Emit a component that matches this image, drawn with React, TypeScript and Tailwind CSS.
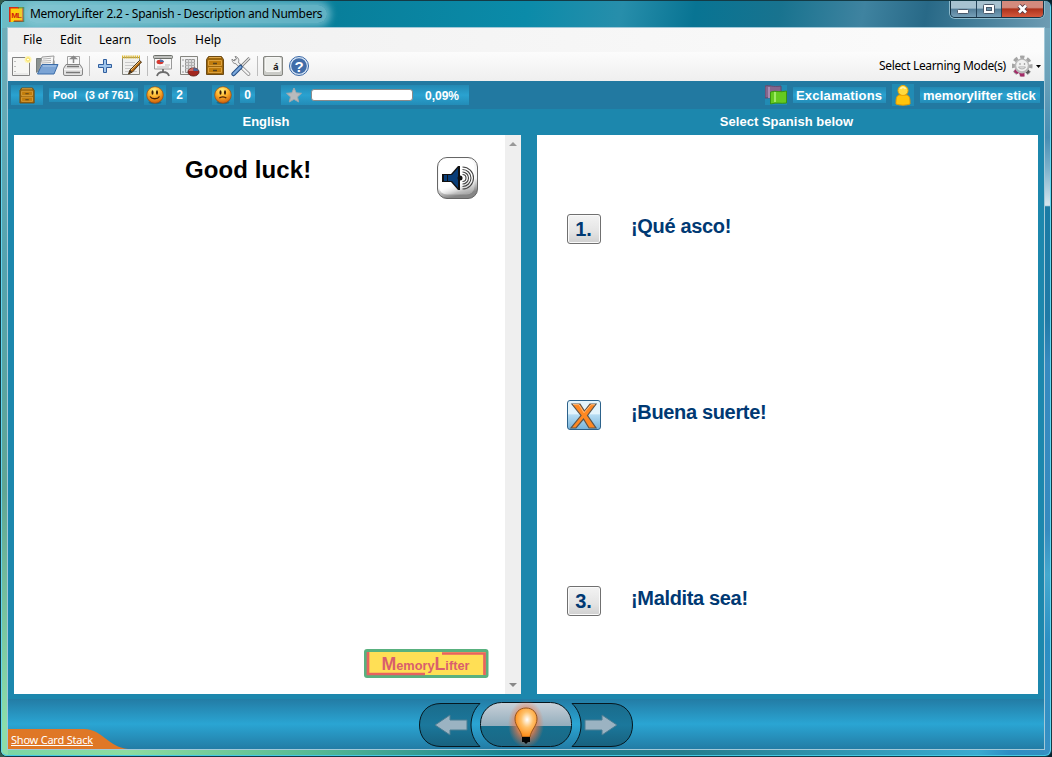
import React from "react";

const ui = "font-['Noto_Sans',sans-serif]";
const arial = "font-['Liberation_Sans',Arial,sans-serif]";
const glow = "bg-linear-to-b from-[#2389b3] via-[#2aa2d0] to-[#238cb7]";

function Tool({ children }: { children: React.ReactNode }) {
  return (
    <button className="h-6 w-[26px] shrink-0">
      <svg width="26" height="24" viewBox="0 0 26 24" fill="none">{children}</svg>
    </button>
  );
}

const Sep = () => (
  <div className="flex h-5 w-[6px] shrink-0 justify-center">
    <div className="h-full w-px bg-[#bdbdbd]" />
  </div>
);

function Cabinet({ dx = 0, dy = 0 }: { dx?: number; dy?: number }) {
  return (
    <g transform={`translate(${dx} ${dy})`}>
      <path d="M2.500 .5h13l2 3v15H.5v-15z" fill="#9c660c" stroke="#6e4b14" />
      <path d="M3 1.500h12" stroke="#dfa84c" />
      <path d="M2.500 4.500h13v5h-13zM2.500 11.500h13v5h-13z" fill="#c17c0b" stroke="#dda13c" />
      <path d="M7 7.500h4M7 14.500h4" stroke="#5a431e" strokeWidth="1.300" />
    </g>
  );
}

function Face({ sad = false }: { sad?: boolean }) {
  const id = sad ? "faceSad" : "faceHappy";
  return (
    <div className="h-5 w-[22px] bg-linear-to-b from-[#2187b0] via-[#239ac7] to-[#2187b0]">
      <svg width="22" height="20" viewBox="0 0 22 20" fill="none">
        <defs>
          <radialGradient id={id} cx=".45" cy=".22" r=".8">
            <stop stopColor="#fff080" /><stop offset=".45" stopColor="#ffb52e" /><stop offset="1" stopColor="#ca5908" />
          </radialGradient>
        </defs>
        <ellipse cx="11" cy="17.500" rx="6.500" ry="1.800" fill="#174f67" opacity=".5" />
        <circle cx="11" cy="10" r="8.300" fill={`url(#${id})`} stroke="#9d4b09" strokeWidth=".7" />
        <ellipse cx="8.500" cy="7.500" rx="1" ry="2.200" fill="#3a1c05" />
        <ellipse cx="13" cy="7.500" rx="1" ry="2.200" fill="#3a1c05" />
        <path d={sad ? "M7.300 13.200c1.500-1.800 5.500-1.800 7 0" : "M6 11.500c2 3 7.500 3 9.500 0"} stroke="#4b2105" strokeWidth="1.300" />
      </svg>
    </div>
  );
}

function TitleBar() {
  return (
    <div className="flex h-[27px] shrink-0 bg-[linear-gradient(100deg,#6ebdc6_0%,#087f9b_32%,#0b8ba9_50%,#278eab_59%,#087493_66%,#18738f_74%,#3f83a0_82%,#286987_88%,#6e9cb3_100%)]">
      <svg className="ml-[7px] mt-[6px] shrink-0" width="16" height="15" viewBox="0 0 16 15">
        <path d="M0 0h15v15H0z" fill="#ffce0b" />
        <path d="M.8 15V.8H10M14.200 0v14.200H5" stroke="#d72815" strokeWidth="1.600" fill="none" />
        <path d="M9 .8h6M14.800 0v15H4" stroke="#2d8a4b" strokeWidth="1" fill="none" />
        <text x="2.300" y="10.500" fontFamily="Liberation Sans, sans-serif" fontWeight="bold" fontSize="8" textLength="10.500" fill="#d21d0c">ML</text>
      </svg>
      <div className={`ml-[2px] mt-[4px] h-[18px] w-[300px] rounded-full bg-[#8fcbd8]/65 pl-[3px] shadow-[0_0_7px_4px_rgba(143,203,216,0.65)] ${ui} whitespace-nowrap text-[12px] leading-[18px] tracking-[-0.27px] text-black`}>
        MemoryLifter 2.2 - Spanish - Description and Numbers
      </div>
      <div className="ml-auto mr-[6px] flex h-[17px] overflow-hidden rounded-b-[5px] border border-t-0 border-[#163345] shadow-[0_0_0_1px_#8cb9cb]">
        <button className="w-[26px] border-r border-[#244359] bg-linear-to-b from-[#a7c2d0] from-45% via-[#537d97] via-50% to-[#769fb8]">
          <svg width="25" height="16" fill="none"><rect x="6.500" y="8.500" width="11" height="4" rx="1" fill="#fff" stroke="#48596b" /></svg>
        </button>
        <button className="w-[25px] border-r border-[#244359] bg-linear-to-b from-[#a7c2d0] from-45% via-[#537d97] via-50% to-[#769fb8]">
          <svg width="24" height="16" fill="none"><rect x="6.500" y="3.500" width="11" height="9" rx="1" fill="#fff" stroke="#48596b" /><rect x="9.500" y="6.500" width="5" height="3" fill="#6991a8" stroke="#48596b" /></svg>
        </button>
        <button className="w-[41px] bg-linear-to-b from-[#d38a7d] from-40% via-[#ad321c] via-50% to-[#d5583c]">
          <svg width="41" height="16" fill="none"><path d="m17 4.500 7 7m0-7-7 7" stroke="#503743" strokeWidth="4.500" /><path d="m17 4.500 7 7m0-7-7 7" stroke="#fff" strokeWidth="2.700" /></svg>
        </button>
      </div>
    </div>
  );
}

function Toolbar() {
  return (
    <div className="flex h-[29px] shrink-0 items-center bg-linear-to-b from-[#fcfcfc] to-[#efefef] pb-px">
      <Tool>
        <path d="M4.500 3.500h17v18h-17z" fill="#f6f6f4" stroke="#838383" /><path d="M6 20h14" stroke="#ddd" /><path d="M7 7v1m0 4v1m0 4v1" stroke="#888" />
        <circle cx="20" cy="5.500" r="3.500" fill="#fff5ae" /><circle cx="20" cy="5.500" r="1.600" fill="#fff" stroke="#f5dc52" />
      </Tool>
      <Tool>
        <path d="M2.500 18.500v-14h6l1.500 2h10v8" fill="#8a9291" stroke="#777d7c" />
        <path d="m8 3 12-1-1 9-14 7z" fill="#f8f8f8" stroke="#999" /><path d="m9 5 8-.7M8 7l9-.5M8 9l9-.5" stroke="#b7b7b7" />
        <path d="M8 10.500h16l-4 9.500H3.500z" fill="#7ba4d5" stroke="#3b6ca8" /><path d="M9 12h13" stroke="#b0caea" />
      </Tool>
      <Tool>
        <path d="M7.500 12V2.500h12V12" fill="#f9f9f9" stroke="#a0a0a0" /><path d="M11 4.500h5l-2.500-2zM13.500 4v5" fill="#888" stroke="#888" strokeWidth="1.500" />
        <path d="m6 10.500-2.500 4V20q0 1.500 1.500 1.500h16q1.500 0 1.500-1.500v-5.500l-2.500-4z" fill="#e2e2e2" stroke="#858585" /><path d="M7 12.500h12" stroke="#777" strokeWidth="1.500" /><path d="M4 15.500h18" stroke="#f7f7f7" /><path d="M6 18.500h14" stroke="#777" strokeWidth="1.500" />
      </Tool>
      <Sep />
      <Tool><path d="M11.500 5.500h3v5h5v3h-5v5h-3v-5h-5v-3h5z" fill="#9fc5ec" stroke="#315f9e" /></Tool>
      <Tool>
        <path d="M4.500 3.500h17v17h-17z" fill="#f0f0ee" stroke="#85857f" /><path d="M4 3h18" stroke="#dcb72e" strokeWidth="3" strokeDasharray="1.300 .8" /><path d="M7 8.500h10M7 11.500h9M7 14.500h7M7 17.500h12" stroke="#c9c9c9" />
        <path d="m21.500 6.500 2 1.500-9 10-4 2 1.500-4z" fill="#b76b13" stroke="#513919" /><path d="m13 16 9-9" stroke="#eac37a" /><path d="m11 19 1-3 2 2z" fill="#302b27" />
      </Tool>
      <Sep />
      <Tool>
        <path d="M4.500 4h17v11h-17z" fill="#f7f7f7" stroke="#999" /><rect x="3.500" y="1.500" width="19" height="3" rx="1" fill="#bfc0bd" stroke="#6d706b" /><ellipse cx="10" cy="8" rx="3.500" ry="2.200" fill="#d43a32" /><path d="M10 8V5.500c2 0 4 1 4 2.500z" fill="#4b70a9" /><path d="M15 11h5M7 13h12" stroke="#bbb" />
        <path d="M13 15v3m-6 4q1-4 6-4t6 4" stroke="#6b6b6b" strokeWidth="1.800" />
      </Tool>
      <Tool>
        <path d="M4.500 2.500h17v18h-17z" fill="#f2f2f2" stroke="#85857f" /><path d="M9.500 5.500h9v13h-9z" fill="#ddd" stroke="#999" /><path d="M9 8.500h10M9 11.500h10M9 14.500h10M12.500 5v13M15.500 5v13" stroke="#b0b0b0" /><path d="M7 5v2m0 4v2m0 4v2" stroke="#999" />
        <ellipse cx="17.500" cy="18" rx="5.500" ry="4" fill="#a32720" stroke="#65231d" /><path d="M17.500 17v-3c-3 0-5 2-5 3z" fill="#cc6860" /><path d="M17.500 17v-3c3 0 5 1 5 3z" fill="#4b679b" />
      </Tool>
      <Tool><Cabinet dx={4} dy={2} /></Tool>
      <Tool>
        <path d="m7 7 13.500 13" stroke="#888" strokeWidth="3.800" strokeLinecap="round" /><path d="M4 5c0 4 3 6 6 3.500 2-2 0-6-3-6l1.500 2.500L6 7z" fill="#eee" stroke="#888" /><path d="m8 8 12.500 12" stroke="#f3f3f3" strokeWidth="2.200" strokeLinecap="round" />
        <path d="m21.500 4-8 8" stroke="#777" strokeWidth="3" /><path d="m21.500 4-8 8" stroke="#e5e5e5" strokeWidth="1.200" /><path d="m12.500 13-7 7" stroke="#264f86" strokeWidth="4.500" strokeLinecap="round" /><path d="m12.500 13-7 7" stroke="#7ba9dc" strokeWidth="2.300" strokeLinecap="round" />
      </Tool>
      <Sep />
      <Tool><rect x="3.500" y="2.500" width="19" height="19" rx="1.500" fill="#cacbc7" stroke="#858681" /><rect x="5.500" y="3.500" width="15" height="14" rx="1.500" fill="#eff0ed" stroke="#f7f7f5" /><text x="13" y="16" fontFamily="Noto Sans, sans-serif" fontWeight="bold" fontSize="9.500" fill="#222">á</text></Tool>
      <Tool><circle cx="13" cy="12" r="9.500" fill="#dbe7f5" stroke="#3967a6" /><circle cx="13" cy="12" r="7.800" fill="#416da9" /><text x="13" y="17.500" textAnchor="middle" fontFamily="Liberation Sans, sans-serif" fontWeight="bold" fontSize="15" fill="#fff">?</text></Tool>
      <div className={`ml-auto mr-[5px] w-[128px] whitespace-nowrap text-[12px] leading-6 tracking-[-0.35px] text-black ${ui}`}>Select Learning Mode(s)</div>
      <svg width="32" height="24" viewBox="0 0 32 24" className="shrink-0">
        <circle cx="10" cy="12" r="8.800" fill="none" stroke="#a5a5a5" strokeWidth="3.500" strokeDasharray="4.200 2.712" strokeDashoffset="2.100" />
        <path d="m3 15-1 3 3 2 2-1 1.500 3.500h4v-4z" fill="#a32a67" /><path d="m13 18 2.500 2 2.500-2-2-3z" fill="#555" />
        <circle cx="10" cy="12" r="7.500" fill="#b9b9b9" /><circle cx="10" cy="11.500" r="5.800" fill="#f1f1f1" /><path d="M8 9v2m4.500-2v2" stroke="#aaa" strokeWidth="1.300" /><path d="M6.500 13c1 2.500 6 2.500 7 0z" fill="#fff" stroke="#aaa" />
        <path d="M24 11h5l-2.500 3z" fill="#000" />
      </svg>
    </div>
  );
}

function StatusBar() {
  return (
    <div className={`flex h-7 shrink-0 items-center bg-[#2279a1] font-bold text-white ${arial}`}>
      <div className={`ml-[3px] h-5 w-8 shrink-0 ${glow}`}><svg width="32" height="20" fill="none"><g transform="translate(8.500 2.500) scale(.84)"><Cabinet /></g></svg></div>
      <div className={`ml-[6px] h-[14px] w-[89px] shrink-0 whitespace-pre pl-1 text-[11px] leading-[14px] ${glow}`}><span className="inline-block w-[32px]">Pool</span>(3 of 761)</div>
      <div className="ml-[6px]"><Face /></div>
      <div className={`ml-[6px] h-4 w-[15px] pb-px text-center text-[12px] leading-[17px] ${glow}`}>2</div>
      <div className="ml-[25px]"><Face sad /></div>
      <div className={`ml-[6px] h-4 w-[15px] pb-px text-center text-[12px] leading-[17px] ${glow}`}>0</div>
      <div className={`ml-[26px] flex h-5 w-[188px] items-center ${glow}`}>
        <svg width="25" height="20" viewBox="0 0 25 20" className="shrink-0"><path d="m13 3 2.200 4.800 5.300.5-4 3.600 1.200 5.100-4.700-2.700L8.300 17l1.200-5.100-4-3.600 5.300-.5z" fill="#b9bbbd" stroke="#a0a8ad" strokeLinejoin="round" /></svg>
        <div className="ml-[5px] h-3 w-[102px] rounded-[3px] border border-[#8b8b8b] bg-white" />
        <span className="ml-3 pt-px text-[12px]">0,09%</span>
      </div>
      <svg className="ml-auto shrink-0 bg-[#218bb4]" width="22" height="20" viewBox="0 0 22 20"><path d="M0 1c5-1 7 1 16 0v12c-6 1-9-1-16 0z" fill="#85668d" stroke="#644568" /><path d="M4 2v11" stroke="#a98bb1" strokeWidth="2" /><path d="M5.500 7c6-2 9 1 16-1v12c-6 1-9-1-16 1z" fill="#65ca20" stroke="#389410" /><path d="M10 7v10" stroke="#a0ea65" strokeWidth="2" /></svg>
      <div className={`ml-[6px] h-4 w-[93px] whitespace-nowrap pl-[3px] text-[13px] leading-[17px] tracking-[0.2px] ${glow}`}>Exclamations</div>
      <svg className="ml-[6px] shrink-0 bg-[#218bb4]" width="22" height="22" viewBox="0 0 22 22"><path d="M7 11c-3 1-3 5-3 9 4 1.500 10 1.500 14 0 0-4 0-8-3-9z" fill="#ffc50c" stroke="#e99a00" /><circle cx="11" cy="6.500" r="5" fill="#ffda40" stroke="#f0a600" /><path d="M8.500 5c1-2.500 4-2.500 5 0" fill="none" stroke="#fff1a5" strokeWidth="2" /></svg>
      <div className={`ml-[6px] mr-[4px] h-4 w-[120px] whitespace-nowrap pl-[3px] text-[13px] leading-[17px] tracking-[0.04px] ${glow}`}>memorylifter stick</div>
    </div>
  );
}

function Answer({ label, text }: { label?: string; text: string }) {
  return (
    <div className="flex h-[186px] pl-[30px] pt-[79px]">
      {label ? (
        <button className={`h-[30px] w-[34px] rounded-[3px] border border-[#707070] bg-linear-to-b from-[#f3f3f3] via-[#e4e4e4] via-60% to-[#d0d0d0] pr-px text-[20px] font-bold leading-7 text-[#003973] shadow-[inset_0_0_0_1px_#fafafa] ${arial}`}>{label}</button>
      ) : (
        <button className="h-[30px] w-[34px] overflow-hidden rounded-[3px] border border-[#2c628b] bg-linear-to-b from-[#e3f4fc] from-45% via-[#b5dcf3] via-50% to-[#78b4da]">
          <svg width="32" height="28" viewBox="0 0 32 28"><path d="M4 3h8l4.500 7 5.500-7h6l-8.500 11.500L28 27h-7l-5.500-9L8 27H3l10-12.500z" fill="#ff8822" stroke="#5d554b" strokeWidth="1.200" /><path d="m5 3.500 6 .2 5 8 7-8h4" fill="none" stroke="#ffbb79" /></svg>
        </button>
      )}
      <div className={`ml-[30px] whitespace-nowrap text-[20px] font-bold leading-6 tracking-[-0.34px] text-[#003973] ${arial}`}>{text}</div>
    </div>
  );
}

function QuestionCard() {
  return (
    <div className="flex h-[559px] w-[507px] bg-white">
      <div className="flex w-[491px] flex-col justify-between">
        <div className="flex h-[70px]">
          <div className={`ml-[171px] mt-[20px] w-[252px] whitespace-nowrap text-[24px] font-bold leading-[30px] tracking-[0.1px] text-black ${arial}`}>Good luck!</div>
          <svg className="mt-[22px]" width="41" height="42" viewBox="0 0 41 42" fill="none">
            <defs>
              <linearGradient id="key" x2=".25" y2="1"><stop offset=".7" stopColor="#f6f6f6" /><stop offset="1" stopColor="#858585" /></linearGradient>
              <linearGradient id="keyTop" x2=".4" y2="1"><stop offset=".75" stopColor="#fff" /><stop offset="1" stopColor="#fff" stopOpacity=".3" /></linearGradient>
            </defs>
            <rect x=".5" y=".5" width="40" height="41" rx="9.500" fill="url(#key)" stroke="#666" /><rect x="2" y="1.500" width="35.500" height="36" rx="8" fill="url(#keyTop)" />
            <path d="M5 17h9l7-8h2v24h-2l-7-8H5z" fill="#111" /><path d="M7 18h3v6H7zM11 18h4l6-7v20l-6-7h-4z" fill="#083d78" /><circle cx="23" cy="21" r="2.500" fill="#111" />
            <path d="M25.500 17.500a3.500 3.500 0 0 1 0 7M25.500 15a6 6 0 0 1 0 12M25.500 12.500a8.500 8.500 0 0 1 0 17M25.500 10a11 11 0 0 1 0 22" stroke="#444" strokeWidth="1.100" />
          </svg>
        </div>
        <svg className="mb-[16px] ml-[350px]" width="125" height="29" viewBox="0 0 125 29">
          <rect width="124.500" height="29" rx="3" fill="#59b17f" /><rect x="3" y="3" width="118.500" height="23" fill="#ffdf55" />
          <path d="M4 3v22h57M78 4.500h42.500V26" fill="none" stroke="#e76360" strokeWidth="2.700" />
          <text x="17.500" y="21" fontFamily="Liberation Sans, sans-serif" fontWeight="bold" fontSize="13" textLength="88" lengthAdjust="spacingAndGlyphs" fill="#d95e6d"><tspan fontSize="18">M</tspan>emory<tspan fontSize="18">L</tspan>ifter</text>
        </svg>
      </div>
      <div className="flex w-4 flex-col items-center justify-between bg-[#efefef] py-[7px]">
        <svg width="8" height="4"><path d="m0 4 4-4 4 4z" fill="#999" /></svg>
        <svg width="8" height="4"><path d="m0 0 4 4 4-4z" fill="#888" /></svg>
      </div>
    </div>
  );
}

function Footer() {
  return (
    <div className="flex h-[50px] shrink-0 bg-linear-to-b from-[#237ca5] via-[#2aa5d3] to-[#237ca5]">
      <div className="grid h-[50px] w-[411px] content-end">
        <svg className="col-start-1 row-start-1" width="120" height="20" viewBox="0 0 120 20"><path d="M0 0h76c18 0 24 18 44 20H0z" fill="#df7726" /></svg>
        <a className={`col-start-1 row-start-1 ml-[3px] pt-[2px] whitespace-nowrap text-[11px] leading-[18px] tracking-[-0.22px] text-white underline underline-offset-1 ${ui}`}>Show Card Stack</a>
      </div>
      <svg width="214" height="50" viewBox="0 0 214 50" fill="none">
        <defs>
          <linearGradient id="side" x2="0" y2="1"><stop stopColor="#1a6b8b" /><stop offset=".5" stopColor="#1b789c" /><stop offset="1" stopColor="#18617e" /></linearGradient>
          <linearGradient id="center" x2="0" y2="1"><stop stopColor="#c9d1d9" /><stop offset=".53" stopColor="#93adbc" /><stop offset=".53" stopColor="#17708f" /><stop offset="1" stopColor="#1b6785" /></linearGradient>
          <radialGradient id="halo"><stop offset=".4" stopColor="#ff8940" stopOpacity=".95" /><stop offset=".65" stopColor="#ef794a" stopOpacity=".55" /><stop offset="1" stopColor="#ef794a" stopOpacity="0" /></radialGradient>
          <radialGradient id="bulb" cx=".55" cy=".4" r=".6"><stop stopColor="#fff" /><stop offset=".45" stopColor="#ffc16a" /><stop offset="1" stopColor="#ff8914" /></radialGradient>
        </defs>
        <path d="M61 4.500H22C8 4.500.5 14 .5 26S8 47.500 22 47.500h39c-12-11-12-32 0-43z" fill="url(#side)" stroke="#061820" />
        <path d="M153 4.500h39c14 0 21.500 9.500 21.500 21.500S206 47.500 192 47.500h-39c12-11 12-32 0-43z" fill="url(#side)" stroke="#061820" />
        <path d="m16 26 15-10v5h17v10H31v5zM198 26l-15-10v5h-17v10h17v5z" fill="#9bb3c2" stroke="#497c92" />
        <rect x="61.500" y="3.500" width="91" height="44" rx="21" fill="url(#center)" stroke="#07151b" />
        <ellipse cx="107" cy="25" rx="18" ry="24" fill="url(#halo)" />
        <path d="M107 9c-7 0-11 5-11 11 0 7 6 11 7 18h8c1-7 7-11 7-18 0-6-4-11-11-11z" fill="url(#bulb)" stroke="#93551e" />
        <path d="M103 38h8v5h-2l-2 2-2-2h-2z" fill="#050505" />
      </svg>
    </div>
  );
}

export default function App() {
  return (
    <div className="h-[757px] w-[1052px] overflow-hidden bg-[linear-gradient(90deg,#345d4e,#083740_25%,#06222d)]">
      <div className="flex h-[757px] w-[1052px] flex-col overflow-hidden rounded-[7px] border border-[#143a45] bg-[linear-gradient(90deg,#79d6a5_0%,#8cdda0_12%,#54ba94_30%,#1c8390_48%,#247e8d_65%,#3aabd0_93%,#2e8ec4_96%,#348fc0_100%)]">
        <div className="h-full w-full bg-[linear-gradient(180deg,#72afba_0%,#54a3ae_35%,#61a693_65%,#8cdda9_96%)] bg-[size:7px_100%] bg-no-repeat">
          <div className="h-full w-full rounded-[6px] border border-[#62d6f0] border-b-[#42c9e4] border-t-[#8fc4ce] bg-[linear-gradient(180deg,#7bacc0_0%,#6ba1b9_10%,#478db3_18%,#7bb0ca_22%,#d5e6ee_27%,#1a7ba5_27.2%,#207aa6_42%,#378ac0_48%,#368abf_70%,#45a9cf_76%,#2b8ec3_85%,#3790c4_100%)] bg-[position:right_top] bg-[size:6px_100%] bg-no-repeat">
            <div className="-mt-px"><TitleBar /></div>
            <div className="mx-[6px] flex h-[721px] flex-col bg-[#1c87ad] outline outline-[#a2c8d8]">
              <nav className={`flex h-6 shrink-0 items-center bg-linear-to-r from-[#efefef] to-[#fcfcfc] text-[12px] text-black ${ui}`}>
                <span className="ml-[15px] w-[37px]">File</span>
                <span className="w-[39px]">Edit</span>
                <span className="w-12">Learn</span>
                <span className="w-12">Tools</span>
                <span>Help</span>
              </nav>
              <Toolbar />
              <StatusBar />
              <div className={`flex h-[26px] shrink-0 pl-[6px] text-center text-[13px] font-bold leading-[25px] tracking-[0.02px] text-white ${arial}`}>
                <div className="w-[504px]">English</div>
                <div className="ml-[19px] w-[499px]">Select Spanish below</div>
              </div>
              <main className="flex h-[564px] shrink-0 gap-4 px-[6px]">
                <QuestionCard />
                <div className="h-[559px] w-[501px] overflow-hidden bg-white">
                  <Answer label="1." text="¡Qué asco!" />
                  <Answer text="¡Buena suerte!" />
                  <Answer label="3." text="¡Maldita sea!" />
                </div>
              </main>
              <Footer />
            </div>
          </div>
        </div>
      </div>
    </div>
  );
}
